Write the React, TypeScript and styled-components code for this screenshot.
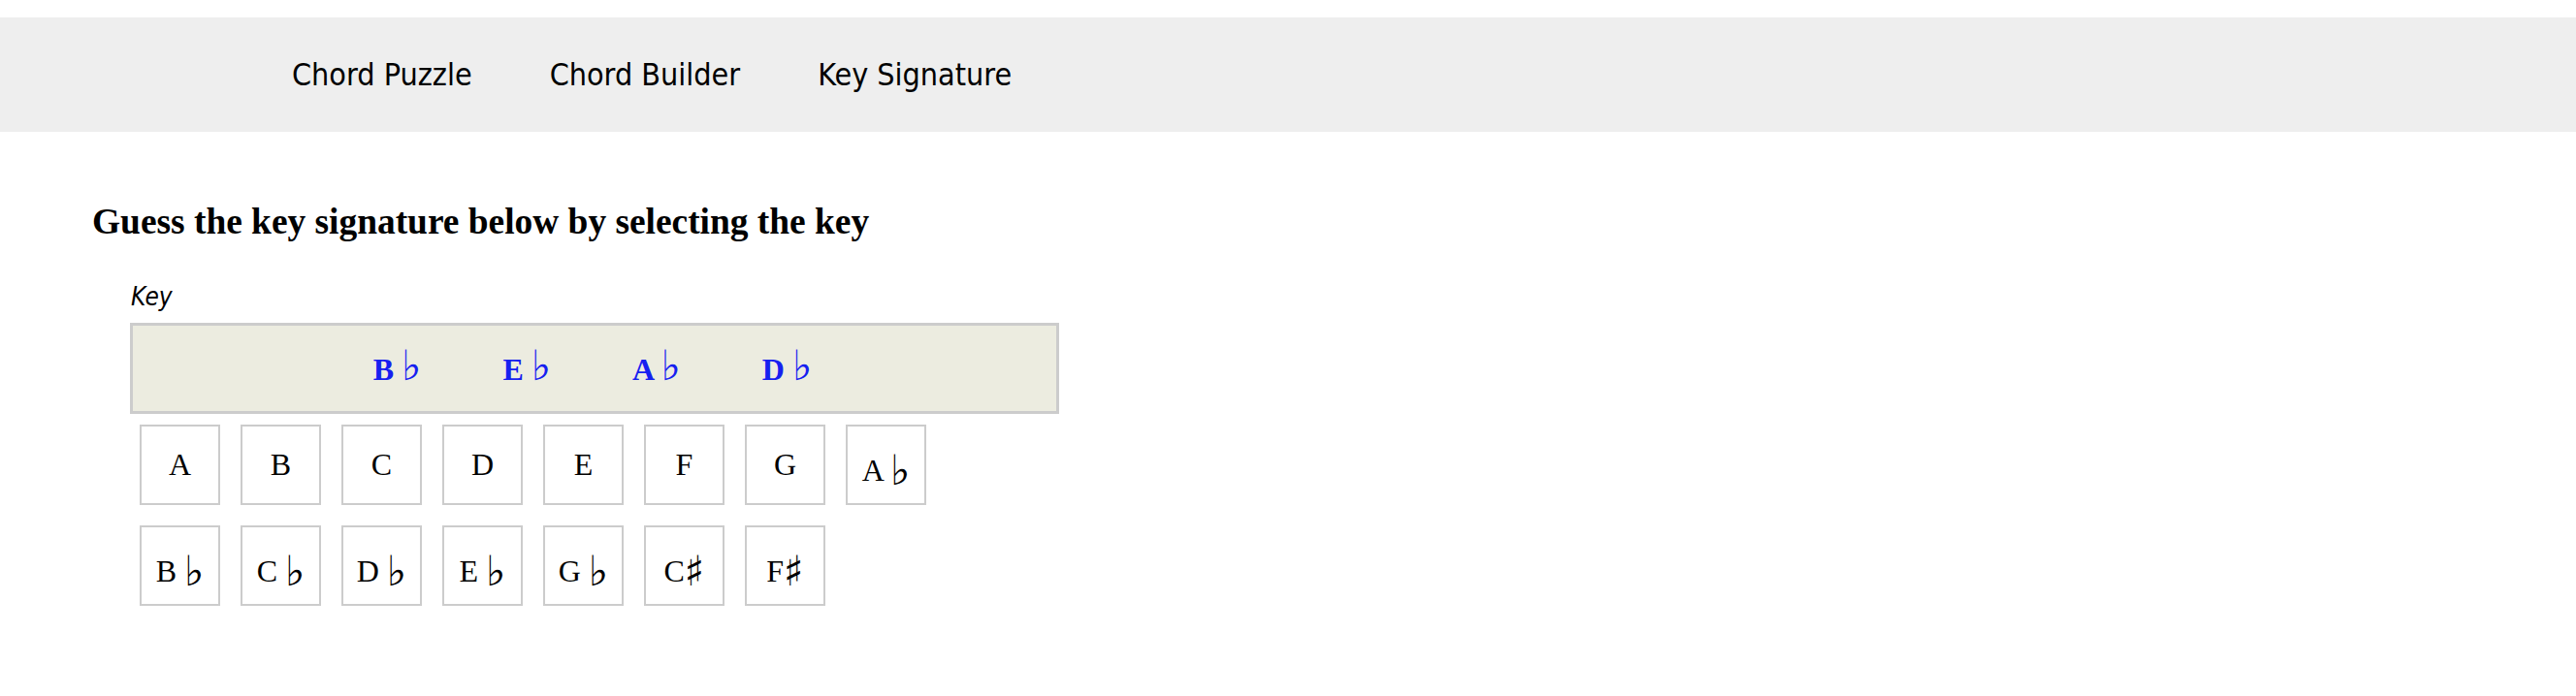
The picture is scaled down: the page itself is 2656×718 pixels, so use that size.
import React from "react";
import styled, { createGlobalStyle } from "styled-components";

const GlobalStyle = createGlobalStyle`
  html, body {
    margin: 0;
    padding: 0;
    background: #ffffff;
  }
  body {
    font-family: "Liberation Serif", "DejaVu Serif", serif;
    color: #000;
  }
`;

const NavBar = styled.nav`
  margin-top: 18px;
  height: 118px;
  background: #eeeeee;
  display: flex;
  align-items: center;
  padding-left: 261px;
`;

const NavLink = styled.a`
  font-family: "DejaVu Sans Condensed", "DejaVu Sans", sans-serif;
  font-stretch: condensed;
  font-size: 32px;
  color: #000;
  text-decoration: none;
  padding: 0 40px;
  cursor: pointer;
`;

const Main = styled.main`
  padding-left: 95px;
`;

const Heading = styled.h1`
  margin: 71px 0 0 0;
  font-family: "Liberation Serif", serif;
  font-weight: bold;
  font-size: 37.4px;
  line-height: 44px;
`;

const Section = styled.section`
  margin-left: 39px;
  margin-top: 40px;
`;

const Label = styled.div`
  font-family: "DejaVu Sans Condensed", "DejaVu Sans", sans-serif;
  font-stretch: condensed;
  font-style: italic;
  font-size: 26px;
  line-height: 30px;
  padding-left: 1px;
`;

const KeyBox = styled.div`
  margin-top: 12px;
  width: 958px;
  height: 94px;
  box-sizing: border-box;
  border: 3px solid #cccccc;
  background: #ecece0;
  display: flex;
  align-items: center;
  justify-content: center;
  gap: 84px;
  padding: 0 4px 4px 0;
`;

const Note = styled.span`
  font-family: "Liberation Serif", serif;
  font-weight: bold;
  font-size: 32px;
  color: #1620f0;
  white-space: pre;
`;

const Sign = styled.span`
  font-family: "DejaVu Sans", sans-serif;
  font-weight: normal;
  font-size: 1.35em;
  line-height: 1;
`;

const ChoiceGrid = styled.div`
  margin-top: 11px;
  margin-left: 10px;
  display: grid;
  grid-template-columns: repeat(8, 83px);
  grid-auto-rows: 83px;
  gap: 21px;
`;

const Choice = styled.button<{ $accidental: boolean }>`
  box-sizing: border-box;
  width: 83px;
  height: 83px;
  padding: ${(p) => (p.$accidental ? "12px 0 0 0" : "0")};
  border: 2px solid #cccccc;
  background: #ffffff;
  font-family: "Liberation Serif", serif;
  font-size: 32px;
  color: #000;
  display: flex;
  align-items: center;
  justify-content: center;
  white-space: pre;
  cursor: pointer;
`;

type Key = { letter: string; sign?: "♭" | "♯" };

const label = (k: Key) => (
  <>
    {k.letter}
    {k.sign === "♭" ? " " : ""}
    {k.sign && <Sign>{k.sign}</Sign>}
  </>
);

const signature: Key[] = [
  { letter: "B", sign: "♭" },
  { letter: "E", sign: "♭" },
  { letter: "A", sign: "♭" },
  { letter: "D", sign: "♭" },
];

const choices: Key[] = [
  { letter: "A" },
  { letter: "B" },
  { letter: "C" },
  { letter: "D" },
  { letter: "E" },
  { letter: "F" },
  { letter: "G" },
  { letter: "A", sign: "♭" },
  { letter: "B", sign: "♭" },
  { letter: "C", sign: "♭" },
  { letter: "D", sign: "♭" },
  { letter: "E", sign: "♭" },
  { letter: "G", sign: "♭" },
  { letter: "C", sign: "♯" },
  { letter: "F", sign: "♯" },
];

export default function App() {
  return (
    <>
      <GlobalStyle />
      <NavBar>
        <NavLink>Chord Puzzle</NavLink>
        <NavLink>Chord Builder</NavLink>
        <NavLink>Key Signature</NavLink>
      </NavBar>
      <Main>
        <Heading>Guess the key signature below by selecting the key</Heading>
        <Section>
          <Label>Key</Label>
          <KeyBox>
            {signature.map((s) => (
              <Note key={s.letter}>{label(s)}</Note>
            ))}
          </KeyBox>
          <ChoiceGrid>
            {choices.map((c) => (
              <Choice key={c.letter + (c.sign ?? "")} $accidental={!!c.sign}>
                {label(c)}
              </Choice>
            ))}
          </ChoiceGrid>
        </Section>
      </Main>
    </>
  );
}
